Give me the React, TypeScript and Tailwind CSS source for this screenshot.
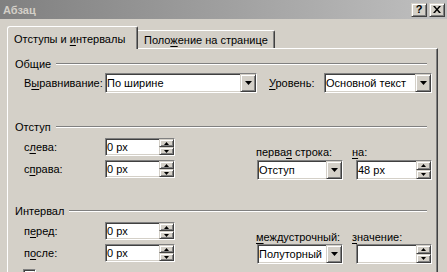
import React from 'react';

const sunken =
  'border border-t-[#808080] border-l-[#808080] border-r-white border-b-white shadow-[inset_1px_1px_0_#404040,inset_-1px_-1px_0_#d4d0c8]';
const raised =
  'border border-t-[#d4d0c8] border-l-[#d4d0c8] border-r-[#404040] border-b-[#404040] shadow-[inset_1px_1px_0_#ffffff,inset_-1px_-1px_0_#808080]';

const Label: React.FC<{ text: string; u: number; className?: string }> = ({ text, u, className = '' }) => (
  <span className={`whitespace-nowrap ${className}`}>
    {text.slice(0, u)}
    <span className="underline underline-offset-[2px]">{text[u]}</span>
    {text.slice(u + 1)}
  </span>
);

const DownArrow = () => (
  <svg width="7" height="4" viewBox="0 0 7 4">
    <path d="M0 0h7L3.5 4z" fill="#000" />
  </svg>
);

const Select: React.FC<{ value: string; className: string }> = ({ value, className }) => (
  <div className={`${sunken} bg-white flex ${className}`}>
    <div className="flex-1 flex items-center pl-px overflow-hidden whitespace-nowrap">{value}</div>
    <div className={`${raised} w-[16px] bg-[#d4d0c8] flex items-center justify-center`}>
      <DownArrow />
    </div>
  </div>
);

const Spin: React.FC<{ value: string; className: string }> = ({ value, className }) => (
  <div className={`${sunken} bg-white flex ${className}`}>
    <div className="flex-1 flex items-center pl-px">{value}</div>
    <div className="w-[15px] flex flex-col">
      <div className={`${raised} flex-1 bg-[#d4d0c8] flex items-center justify-center`}>
        <svg width="5" height="3" viewBox="0 0 5 3">
          <path d="M2.5 0L5 3H0z" fill="#000" />
        </svg>
      </div>
      <div className={`${raised} flex-1 bg-[#d4d0c8] flex items-center justify-center`}>
        <svg width="5" height="3" viewBox="0 0 5 3">
          <path d="M0 0h5L2.5 3z" fill="#000" />
        </svg>
      </div>
    </div>
  </div>
);

const Heading: React.FC<{ text: string; className: string }> = ({ text, className }) => (
  <div className={`flex items-center h-[14px] pl-[7px] pr-[10px] ${className}`}>
    <span>{text}</span>
    <div className="flex-1 ml-[5px] h-[2px] border-t border-t-[#808080] border-b border-b-white" />
  </div>
);

export default function App() {
  return (
    <div className="w-[447px] h-[272px] overflow-hidden bg-[#d4d0c8] text-[11px] leading-[14px] text-black font-['Liberation_Sans',Arial,sans-serif]">
      {/* title bar */}
      <div className="h-[19px] flex items-center bg-gradient-to-r from-[#808080] to-[#c0c0c0] pl-[3px] pr-[2px]">
        <span className="flex-1 font-bold text-[#d4d0c8]">Абзац</span>
        <div className={`${raised} w-[16px] h-[14px] bg-[#d4d0c8] flex items-center justify-center font-bold text-[11px] leading-none`}>
          ?
        </div>
        <div className={`${raised} w-[16px] h-[14px] ml-[2px] bg-[#d4d0c8] flex items-center justify-center`}>
          <svg width="8" height="7" viewBox="0 0 8 7">
            <path d="M0 0h2l2 2.5L6 0h2L5 3.5 8 7H6L4 4.5 2 7H0l3-3.5z" fill="#000" />
          </svg>
        </div>
      </div>

      <div className="pl-[7px] pt-[7px]">
        {/* tabs */}
        <div className="flex items-end h-[22px]">
          <div className="relative z-10 -mb-px w-[131px] h-[23px] bg-[#d4d0c8] border-l border-t border-white border-r border-r-[#404040] shadow-[inset_-1px_0_0_#808080] rounded-tl-[3px] rounded-tr-[2px] pl-[6px] pt-[5px]">
            Отступы и <Label text="интервалы" u={0} />
          </div>
          <div className="w-[137px] h-[18px] border-t border-white border-r border-r-[#404040] shadow-[inset_-1px_0_0_#808080] rounded-tr-[2px] pl-[6px] pt-[2px]">
            <Label text="Положение" u={4} /> на странице
          </div>
        </div>

        {/* panel */}
        <div className="w-[431px] h-[240px] border-l border-t border-white border-r border-r-[#404040] shadow-[inset_-1px_0_0_#808080]">
          <Heading text="Общие" className="mt-[8px]" />
          <div className="flex items-center h-[20px] mt-[2px] pl-[16px]">
            <Label text="Выравнивание:" u={1} className="w-[81px]" />
            <Select value="По ширине" className="w-[152px] h-[20px]" />
            <Label text="Уровень:" u={0} className="ml-[12px] w-[55px]" />
            <Select value="Основной текст" className="w-[108px] h-[20px]" />
          </div>

          <Heading text="Отступ" className="mt-[27px]" />
          <div className="flex items-start pl-[16px]">
            <div className="flex flex-col gap-[4px] mt-[4px]">
              <div className="flex items-center">
                <Label text="слева:" u={1} className="w-[81px]" />
                <Spin value="0 px" className="w-[70px] h-[18px]" />
              </div>
              <div className="flex items-center">
                <Label text="справа:" u={1} className="w-[81px]" />
                <Spin value="0 px" className="w-[70px] h-[18px]" />
              </div>
            </div>
            <div className="ml-[81px] mt-[11px] w-[96px]">
              <Label text="первая строка:" u={5} className="block" />
              <Select value="Отступ" className="mt-px ml-px w-[86px] h-[20px]" />
            </div>
            <div className="mt-[11px]">
              <Label text="на:" u={0} className="block" />
              <Spin value="48 px" className="mt-px ml-[4px] w-[76px] h-[20px]" />
            </div>
          </div>

          <Heading text="Интервал" className="mt-[24px]" />
          <div className="flex items-start pl-[16px]">
            <div className="flex flex-col gap-[4px] mt-[4px]">
              <div className="flex items-center">
                <Label text="перед:" u={1} className="w-[81px]" />
                <Spin value="0 px" className="w-[70px] h-[18px]" />
              </div>
              <div className="flex items-center">
                <Label text="после:" u={1} className="w-[81px]" />
                <Spin value="0 px" className="w-[70px] h-[18px]" />
              </div>
            </div>
            <div className="ml-[81px] mt-[12px] w-[96px]">
              <Label text="междустрочный:" u={0} className="block" />
              <Select value="Полуторный" className="ml-px w-[86px] h-[20px]" />
            </div>
            <div className="mt-[12px]">
              <Label text="значение:" u={0} className="block" />
              <Spin value="" className="ml-[4px] w-[76px] h-[20px]" />
            </div>
          </div>

          <div className="pl-[15px] mt-[5px]">
            <div className={`${sunken} w-[13px] h-[13px] bg-white`} />
          </div>
        </div>
      </div>
    </div>
  );
}
